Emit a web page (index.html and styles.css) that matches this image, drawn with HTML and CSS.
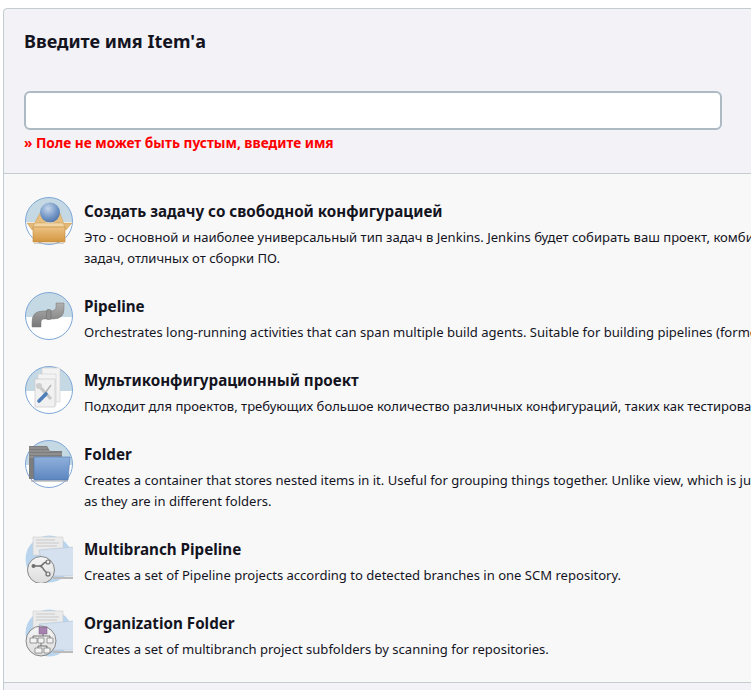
FILE: index.html
```html
<!DOCTYPE html>
<html lang="ru">
<head>
<meta charset="utf-8">
<title>Новый Item</title>
<link rel="stylesheet" href="styles.css">
</head>
<body>
<svg class="defs" width="0" height="0" aria-hidden="true">
  <defs>
    <clipPath id="disc"><circle cx="24" cy="24" r="23.5"/></clipPath>
    <radialGradient id="ball" cx="0.4" cy="0.3" r="0.8"><stop offset="0" stop-color="#c6d6ea"/><stop offset="0.6" stop-color="#6f93c4"/><stop offset="1" stop-color="#4a6c9e"/></radialGradient>
    <linearGradient id="box" x1="0" y1="0" x2="0" y2="1"><stop offset="0" stop-color="#ecc283"/><stop offset="1" stop-color="#d4963f"/></linearGradient>
    <linearGradient id="pipe" x1="0" y1="0" x2="0" y2="1"><stop offset="0" stop-color="#b0b0b0"/><stop offset="1" stop-color="#787878"/></linearGradient>
    <linearGradient id="folder" x1="0" y1="0" x2="0" y2="1"><stop offset="0" stop-color="#8fb0dc"/><stop offset="1" stop-color="#5d86bf"/></linearGradient>
    <linearGradient id="badge" x1="0" y1="0" x2="0" y2="1"><stop offset="0" stop-color="#f6f6f6"/><stop offset="1" stop-color="#dcdcdc"/></linearGradient>
    <g id="base">
      <circle cx="24" cy="24" r="23.5" fill="#fff"/>
      <path d="M0 25H48V0H0Z" fill="#c5d9e5" clip-path="url(#disc)"/>
    </g>
    <g id="ring"><circle cx="24" cy="24" r="23.5" fill="none" stroke="#7ea6d6" stroke-width="1"/></g>
    <g id="stackedfolder">
      <circle cx="24" cy="24" r="23.5" fill="#b9d5ee"/>
      <path d="M8 2H38V20H8Z" fill="#ebebeb" stroke="#cfcfcf" stroke-width=".6"/>
      <path d="M11 5H30M11 8H34M11 11H32" stroke="#c9c9c9" stroke-width="1"/>
      <path d="M14 15L49 12V41H20Z" fill="#d5e1ee" stroke="#b7c8da" stroke-width=".7"/>
      <path d="M28 43H48" stroke="#bbb" stroke-width="2"/>
    </g>
  </defs>
</svg>
<main class="panel">
  <section class="header">
    <h2 class="title">Введите имя Item'а</h2>
    <input class="name-input" type="text" aria-label="Имя">
    <p class="error">» Поле не может быть пустым, введите имя</p>
  </section>
  <section class="list">
    <article class="item">
      <svg class="icon" viewBox="0 0 48 48">
        <use href="#base"/><use href="#ring"/>
        <path d="M9 27L15 16 23 25ZM39 27L35 16 27 25Z" fill="#e6bf80" stroke="#c79243" stroke-width=".4"/>
        <circle cx="25" cy="15.500" r="10" fill="url(#ball)"/>
        <path d="M9 26L2 26 7 33 11 31ZM39 26L47 26 41 33 37 31Z" fill="#e3b878" stroke="#c79243" stroke-width=".4"/>
        <path d="M10 26H38L40 30H8Z" fill="#f2d6a6" stroke="#c79243" stroke-width=".4"/>
        <path d="M8 30H40V45H8Z" fill="url(#box)" stroke="#c08a3c" stroke-width=".6"/>
        <path d="M9 46.500H39" stroke="#aaa" stroke-width="1" opacity=".5"/>
      </svg>
      <div class="body">
        <h3 class="name">Создать задачу со свободной конфигурацией</h3>
        <p class="desc">Это - основной и наиболее универсальный тип задач в Jenkins. Jenkins будет собирать ваш проект, комбинируя<br>задач, отличных от сборки ПО.</p>
      </div>
    </article>
    <article class="item">
      <svg class="icon" viewBox="0 0 48 48">
        <use href="#base"/><use href="#ring"/>
        <path d="M7 35V30Q7 19 18 19H25Q31 19 31 15V11H39V17Q39 27 28 27H19Q16 27 16 30V35Z" fill="url(#pipe)" stroke="#777" stroke-width=".5"/>
        <rect x="21.500" y="17.500" width="4.500" height="10" rx="1.500" fill="#8f8f8f" stroke="#666" stroke-width=".5"/>
      </svg>
      <div class="body">
        <h3 class="name">Pipeline</h3>
        <p class="desc">Orchestrates long-running activities that can span multiple build agents. Suitable for building pipelines (formerly</p>
      </div>
    </article>
    <article class="item">
      <svg class="icon" viewBox="0 0 48 48">
        <use href="#base"/><use href="#ring"/>
        <path d="M17 2H35V36H17Z" fill="#f3f3f3" stroke="#d2d2d2" stroke-width=".6"/>
        <path d="M13 8H31V39H13Z" fill="#f3f3f3" stroke="#d2d2d2" stroke-width=".6"/>
        <path d="M10 13H30V41H10Z" fill="#f1f1f1" stroke="#c8c8c8" stroke-width=".7"/>
        <path d="M14 20L26 33" stroke="#c8c8c8" stroke-width="3.200"/>
        <circle cx="14" cy="20" r="3" fill="#cfcfcf"/>
        <path d="M26 19L18 30" stroke="#b5b5b5" stroke-width="1.500"/>
        <path d="M21 28L14 35" stroke="#4f7fb8" stroke-width="3.600" stroke-linecap="round"/>
      </svg>
      <div class="body">
        <h3 class="name">Мультиконфигурационный проект</h3>
        <p class="desc">Подходит для проектов, требующих большое количество различных конфигураций, таких как тестирование</p>
      </div>
    </article>
    <article class="item">
      <svg class="icon" viewBox="0 0 48 48">
        <use href="#base"/><use href="#ring"/>
        <path d="M4 6H22L25 11H37V39H4Z" fill="#7d7d7d"/>
        <path d="M4 8H22M4 11H25M4 14H37M4 17H37" stroke="#a2a2a2" stroke-width="1"/>
        <path d="M6 41H43" stroke="#999" stroke-width="2" opacity=".5"/>
        <path d="M9 17H45L43 40H9Z" fill="url(#folder)" stroke="#4c76ae" stroke-width=".6"/>
      </svg>
      <div class="body">
        <h3 class="name">Folder</h3>
        <p class="desc">Creates a container that stores nested items in it. Useful for grouping things together. Unlike view, which is just<br>as they are in different folders.</p>
      </div>
    </article>
    <article class="item">
      <svg class="icon" viewBox="0 0 48 48">
        <use href="#stackedfolder"/>
        <circle cx="16" cy="35" r="13.500" fill="url(#badge)" stroke="#6d6d6d" stroke-width=".8"/>
        <path d="M8 31H14Q17 31 19 35L22 38M14 31Q17 31 19 28L21 27" fill="none" stroke="#6f6f6f" stroke-width="1.400"/>
        <circle cx="8.500" cy="31" r="2" fill="#6f6f6f"/>
        <circle cx="23" cy="27" r="2" fill="none" stroke="#6f6f6f" stroke-width="1.200"/>
        <circle cx="23" cy="39" r="2" fill="none" stroke="#6f6f6f" stroke-width="1.200"/>
      </svg>
      <div class="body">
        <h3 class="name">Multibranch Pipeline</h3>
        <p class="desc">Creates a set of Pipeline projects according to detected branches in one SCM repository.</p>
      </div>
    </article>
    <article class="item">
      <svg class="icon" viewBox="0 0 48 48">
        <use href="#stackedfolder"/>
        <circle cx="16" cy="32" r="15" fill="url(#badge)" stroke="#6d6d6d" stroke-width=".8"/>
        <rect x="14" y="18" width="8" height="7" fill="#a583ae" stroke="#7b5c86" stroke-width=".5"/>
        <path d="M18 25V27M8 29V27H25V29M16 34V37M13 39V37H22V39" fill="none" stroke="#555" stroke-width=".8"/>
        <path d="M5 29H12V34H5ZM13 29H19V34H13ZM22 29H28V34H22ZM10 39H17V44H10ZM19 39H25V44H19Z" fill="#f3f3f3" stroke="#777" stroke-width=".7"/>
      </svg>
      <div class="body">
        <h3 class="name">Organization Folder</h3>
        <p class="desc">Creates a set of multibranch project subfolders by scanning for repositories.</p>
      </div>
    </article>
  </section>
  <div class="footer"></div>
</main>
</body>
</html>
```
FILE: styles.css
```css
html, body { margin: 0; height: 100%; background: #fff; overflow: hidden; }
body { padding: 8px 0 0 3px; box-sizing: border-box; font-family: "Noto Sans", "Open Sans", sans-serif; color: #14141f; }
.defs { position: absolute; }
.panel { width: 1000px; border: 1px solid #c3ccd1; border-radius: 4px 0 0 0; box-sizing: border-box; height: 700px; background: #f2f2f7; display: flex; flex-direction: column; }
.header { height: 165px; padding: 20px 20px 0; box-sizing: border-box; border-bottom: 1px solid #c3ccd1; }
.title { margin: 0; font-size: 18px; line-height: 24px; font-weight: 700; }
.name-input { display: block; width: 698px; height: 39px; margin: 38px 0 0; padding: 0 8px; box-sizing: border-box; border: 2px solid #adb9c3; border-radius: 6px; background: #fff; }
.error { margin: 4px 0 0; font-size: 13.660px; line-height: 18px; font-weight: 700; color: #f00; }
.list { height: 509px; padding: 23px 20px 0 21px; box-sizing: border-box; background: #f8f8f8; border-bottom: 1px solid #c3ccd1; }
.item { display: flex; gap: 11px; min-height: 74px; }
.item:has(br) { min-height: 95px; }
.icon { flex: none; width: 48px; height: 48px; }
.body { white-space: nowrap; padding-top: 4px; }
.name { margin: 0; font-size: 15.200px; line-height: 20px; font-weight: 700; }
.desc { margin: 6px 0 0; font-size: 13.060px; line-height: 20.500px; color: #14141f; }
.footer { flex: 1; }
```
